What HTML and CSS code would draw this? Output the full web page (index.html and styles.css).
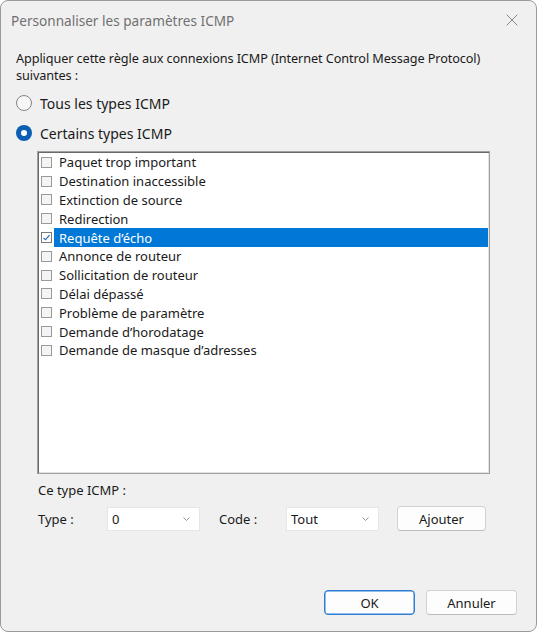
FILE: index.html
```html
<!DOCTYPE html>
<html lang="fr">
<head>
<meta charset="utf-8">
<title>Personnaliser les paramètres ICMP</title>
<link rel="stylesheet" href="styles.css">
</head>
<body>
<div class="dialog">
  <div class="titlebar">
    <span class="title">Personnaliser les paramètres ICMP</span>
    <svg class="close" width="12" height="12" viewBox="0 0 12 12"><path d="M0.5 0.5 L11.5 11.5 M11.5 0.5 L0.5 11.5" stroke="#8a8a8a" stroke-width="1"/></svg>
  </div>
  <div class="content">
    <p class="intro">Appliquer cette règle aux connexions ICMP (Internet Control Message Protocol) suivantes :</p>
    <div class="radios">
      <div class="radio-row"><span class="radio"></span><span>Tous les types ICMP</span></div>
      <div class="radio-row"><span class="radio on"></span><span>Certains types ICMP</span></div>
    </div>
    <div class="listbox">
      <div class="item"><span class="cb"></span><span class="lbl">Paquet trop important</span></div>
      <div class="item"><span class="cb"></span><span class="lbl">Destination inaccessible</span></div>
      <div class="item"><span class="cb"></span><span class="lbl">Extinction de source</span></div>
      <div class="item"><span class="cb"></span><span class="lbl">Redirection</span></div>
      <div class="item sel"><span class="cb checked"><svg width="9" height="9" viewBox="0 0 9 9"><path d="M1.5 4.8 L3.5 6.8 L7.5 2.2" fill="none" stroke="#1a5fb0" stroke-width="1.1"/></svg></span><span class="lbl">Requête d’écho</span></div>
      <div class="item"><span class="cb"></span><span class="lbl">Annonce de routeur</span></div>
      <div class="item"><span class="cb"></span><span class="lbl">Sollicitation de routeur</span></div>
      <div class="item"><span class="cb"></span><span class="lbl">Délai dépassé</span></div>
      <div class="item"><span class="cb"></span><span class="lbl">Problème de paramètre</span></div>
      <div class="item"><span class="cb"></span><span class="lbl">Demande d’horodatage</span></div>
      <div class="item"><span class="cb"></span><span class="lbl">Demande de masque d’adresses</span></div>
    </div>
    <div class="type-caption">Ce type ICMP :</div>
    <div class="type-row">
      <span class="field-label type-label">Type :</span>
      <div class="combo"><span>0</span><svg width="7" height="4" viewBox="0 0 7 4"><path d="M0.5 0.5 L3.5 3.5 L6.5 0.5" fill="none" stroke="#8a8a8a" stroke-width="0.9"/></svg></div>
      <span class="field-label code-label">Code :</span>
      <div class="combo"><span>Tout</span><svg width="7" height="4" viewBox="0 0 7 4"><path d="M0.5 0.5 L3.5 3.5 L6.5 0.5" fill="none" stroke="#8a8a8a" stroke-width="0.9"/></svg></div>
      <button class="btn add">Ajouter</button>
    </div>
  </div>
  <div class="footer">
    <button class="btn primary">OK</button>
    <button class="btn">Annuler</button>
  </div>
</div>
</body>
</html>
```
FILE: styles.css
```css
* { box-sizing: border-box; }
html, body { margin: 0; padding: 0; background: #ffffff; }
body {
  font-family: "Noto Sans", "Open Sans", sans-serif;
  color: #1a1a1a;
}
.dialog {
  width: 537px;
  height: 632px;
  background: #f0f0f0;
  border: 1px solid #9a9a9a;
  border-radius: 8px;
  display: flex;
  flex-direction: column;
  overflow: hidden;
}
.titlebar {
  height: 38px;
  display: flex;
  align-items: center;
  justify-content: space-between;
  padding: 0 18px 0 10px;
}
.title {
  font-size: 13.6px;
  color: #707070;
}
.content {
  padding: 0 15px;
  font-size: 13px;
}
.intro {
  margin: 11px 0 0 0;
  line-height: 17px;
  font-size: 12.7px;
  letter-spacing: -0.1px;
  width: 495px;
}
.radios { margin-top: 4px; }
.radio-row {
  height: 30px;
  display: flex;
  align-items: center;
  gap: 8px;
  font-size: 14px;
}
.radio {
  width: 16px;
  height: 16px;
  border-radius: 50%;
  border: 1px solid #858585;
  background: #f7f7f7;
  display: inline-block;
}
.radio.on {
  border: none;
  background: #0a5fb4;
  position: relative;
}
.radio.on::after {
  content: "";
  position: absolute;
  left: 5px;
  top: 5px;
  width: 6px;
  height: 6px;
  border-radius: 50%;
  background: #ffffff;
}
.listbox {
  margin: 3px 0 0 21px;
  width: 453px;
  height: 323px;
  background: #ffffff;
  border: 1px solid #a0a0a0;
  box-shadow: inset 1px 1px 0 #696969, inset -1px -1px 0 #e3e3e3;
  padding: 1px 1px;
}
.item {
  height: 18.8px;
  display: flex;
  align-items: center;
  padding-left: 2px;
  font-size: 13px;
}
.cb {
  width: 11px;
  height: 11px;
  border: 1px solid #9a9a9a;
  background: #f4f4f4;
  display: flex;
  align-items: center;
  justify-content: center;
  flex: none;
}
.cb.checked { background: #ffffff; border-color: #7a7a7a; }
.lbl {
  flex: 1;
  height: 100%;
  display: flex;
  align-items: center;
  margin-left: 2px;
  padding-left: 5px;
}
.item.sel .lbl {
  background: #0078d7;
  color: #ffffff;
}
.type-caption {
  margin: 8px 0 0 22px;
  line-height: 17px;
}
.type-row {
  margin: 7px 0 0 22px;
  display: flex;
  align-items: center;
  height: 25px;
}
.field-label { flex: none; }
.type-label { width: 69px; }
.code-label { width: 67px; margin-left: 19px; }
.combo {
  width: 93px;
  height: 24px;
  background: #ffffff;
  border: 1px solid #e6e6e6;
  display: flex;
  align-items: center;
  justify-content: space-between;
  padding: 0 9px 0 4px;
  font-size: 13px;
}
.btn {
  font-family: "Noto Sans", "Open Sans", sans-serif;
  font-size: 13px;
  color: #1a1a1a;
  background: #fdfdfd;
  border: 1px solid #d2d2d2;
  border-bottom-color: #bdbdbd;
  border-radius: 4px;
  height: 25px;
  padding: 0;
}
.add { width: 89px; margin-left: 18px; }
.footer {
  margin-top: auto;
  display: flex;
  justify-content: flex-end;
  gap: 11px;
  padding: 0 19px 16px 0;
}
.footer .btn { width: 91px; }
.btn.primary { border: 1px solid #2b7cd3; box-shadow: inset 0 0 0 0.5px #2b7cd3; }
```
